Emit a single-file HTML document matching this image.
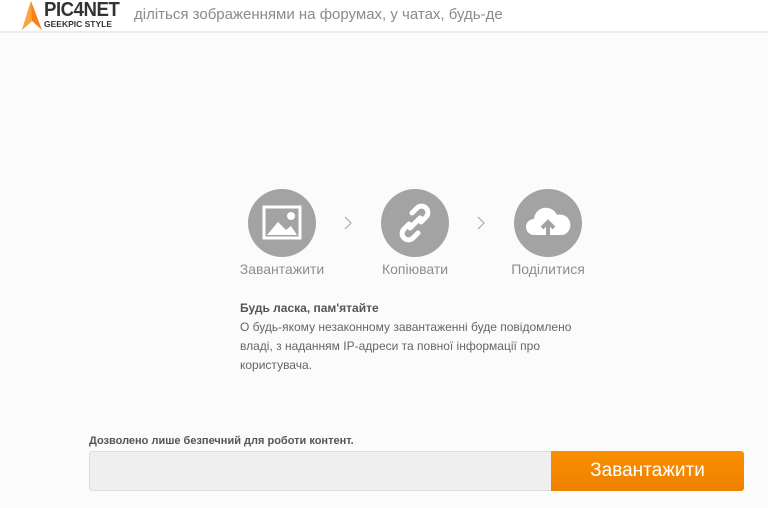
<!DOCTYPE html>
<html><head><meta charset="utf-8"><style>
body{margin:0;width:768px;height:508px;background:#fbfbfb;font-family:"Liberation Sans","DejaVu Sans",sans-serif;position:relative;overflow:hidden}
.hdr{position:absolute;left:0;top:0;width:768px;height:31px;background:#fff;border-bottom:2px solid #ececec}
.tag{position:absolute;left:134px;top:6px;font-size:15px;color:#8a8a8a}
.c{position:absolute;top:189px;width:68px;height:68px;border-radius:50%;background:#a3a3a3}
.lbl{position:absolute;top:261px;font-size:14px;color:#8e8e8e;width:140px;text-align:center}
.ar{position:absolute;top:216px}
.t{position:absolute;left:240px;font-size:12px;color:#666}
</style></head><body>
<div class="hdr">
<svg style="position:absolute;left:20px;top:1px" width="22" height="29" viewBox="0 0 22 29"><path d="M11 0 L22 29 L12 20 L2 29 Z" fill="#f7811c"/><path d="M11 0 L2 29 L12 20 Z" fill="#fba43a"/></svg>
<div style="position:absolute;left:44px;top:-1px;font-size:20px;color:#333;letter-spacing:-0.5px;font-weight:bold;transform:scaleX(0.93);transform-origin:left">PIC4NET</div>
<div style="position:absolute;left:44px;top:19px;font-size:8.5px;color:#333;font-weight:bold">GEEKPIC STYLE</div>
<div class="tag">діліться зображеннями на форумах, у чатах, будь-де</div>
</div>
<div class="c" style="left:248px"><svg width="68" height="68" viewBox="0 0 68 68"><rect x="16" y="18" width="36" height="31" fill="none" stroke="#fff" stroke-width="3"/><path d="M19 46 L30 33 L38 41 L43 37 L49 46Z" fill="#fff"/><circle cx="43" cy="27" r="4" fill="#fff"/></svg></div>
<div class="c" style="left:381px"><svg width="68" height="68" viewBox="0 0 68 68"><g fill="none" stroke="#fff" stroke-width="5" stroke-linecap="round"><path d="M31 24 l5-5 a6 6 0 0 1 9 9 l-5 5"/><path d="M37 44 l-5 5 a6 6 0 0 1 -9 -9 l5-5"/><path d="M29 39 l10-10"/></g></svg></div>
<div class="c" style="left:514px"><svg width="68" height="68" viewBox="0 0 68 68"><path d="M20 46 a8 8 0 0 1 0-16 a12 12 0 0 1 23-4 a9 9 0 0 1 6 20 Z" fill="#fff"/><path d="M34 48 V34 M28 39 L34 33 L40 39" stroke="#a3a3a3" stroke-width="4" fill="none"/></svg></div>
<svg class="ar" style="left:344px" width="8" height="14" viewBox="0 0 8 14"><path d="M1 1 L7 7 L1 13" stroke="#aaa" stroke-width="1.2" fill="none"/></svg>
<svg class="ar" style="left:477px" width="8" height="14" viewBox="0 0 8 14"><path d="M1 1 L7 7 L1 13" stroke="#aaa" stroke-width="1.2" fill="none"/></svg>
<div class="lbl" style="left:212px">Завантажити</div>
<div class="lbl" style="left:345px">Копіювати</div>
<div class="lbl" style="left:478px">Поділитися</div>
<div class="t" style="top:301px;font-weight:bold;color:#555">Будь ласка, пам'ятайте</div>
<div class="t" style="top:318px;line-height:19px">О будь-якому незаконному завантаженні буде повідомлено<br>владі, з наданням IP-адреси та повної інформації про<br>користувача.</div>
<div style="position:absolute;left:89px;top:435px;font-size:11px;font-weight:bold;color:#555">Дозволено лише безпечний для роботи контент.</div>
<div style="position:absolute;left:89px;top:451px;width:461px;height:38px;background:#efefef;border:1px solid #ddd;border-radius:3px 0 0 3px"></div>
<div style="position:absolute;left:551px;top:451px;width:193px;height:40px;background:linear-gradient(#f99000,#ee8000);border-radius:0 3px 3px 0;color:#fff;font-size:19px;text-align:center;line-height:40px">Завантажити</div>
</body></html>
